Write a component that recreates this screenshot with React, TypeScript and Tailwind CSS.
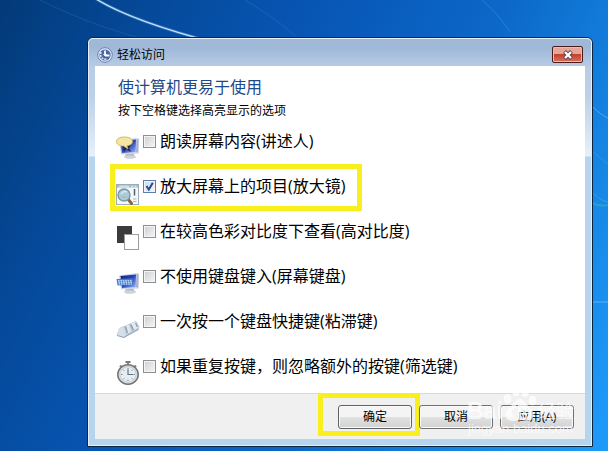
import { useState } from "react";
import { clsx } from "clsx";
import type { ReactNode } from "react";

type TOption = {
  id: string;
  label: string;
  icon: ReactNode;
  highlighted?: boolean;
};

const Monitor = () => (
  <>
    <path d="M9 18.5 L17 17 L19 20.500 Q15 23 10 22 Z" fill="#b4b8c0" />
    <ellipse cx="14" cy="21" rx="6" ry="1.8" fill="#cfd2d8" />
    <path d="M3 4.5 L21 2 Q23 2 23 4 L22.5 17.5 L5 18.5 Z" fill="#ccd5e8" />
    <path d="M4.5 5 L20 3.5 L19.500 16 L6 17 Z" fill="url(#screen)" />
    <path d="M20.5 3.5 L22.5 3 L22.2 16.8 L20 16 Z" fill="#a4b2d0" />
  </>
);

const NarratorIcon = () => (
  <svg viewBox="0 0 24 24" className="size-6" aria-hidden="true">
    <defs>
      <linearGradient id="screen" x1="0" y1="0" x2="1" y2="1">
        <stop offset="0" stopColor="#101f78" />
        <stop offset="0.5" stopColor="#2a45c0" />
        <stop offset="1" stopColor="#9db4f6" />
      </linearGradient>
    </defs>
    <Monitor />
    <path d="M7 9 L15 9 L13 12 L15 16 L10 13 L8 16 Z" fill="#23233c" />
    <path
      d="M8 1 C13 1 16.500 2.500 16.500 5.500 C16.500 8 14 9.500 11 9.800 L12 13 L7.500 10 C3 10 0.500 8 0.500 5.500 C0.500 2.500 4 1 8 1 Z"
      fill="#f3e5a4"
      stroke="#c8a850"
      strokeWidth="0.8"
    />
  </svg>
);

const MagnifierIcon = () => (
  <svg viewBox="0 0 24 24" className="size-6" aria-hidden="true">
    <rect x="0.5" y="3.500" width="22" height="20" fill="#f6f9fb" stroke="#9badba" />
    <rect x="1" y="4" width="21" height="2.500" fill="#a3bacb" />
    <path d="M3 5.2 H13 M15 5.2 H17 M18.500 5.2 H20.500" stroke="#eef5fa" />
    <path d="M18.500 8 V14.500" stroke="#4f6270" strokeWidth="1.500" />
    <path d="M17 18 H20.500 M17 20.500 H20.500" stroke="#a9b6c0" />
    <path d="M12 18 L15.500 22.500" stroke="#8b6741" strokeWidth="3" strokeLinecap="round" />
    <circle cx="8" cy="14" r="6" fill="#a9c9df" stroke="#7c97a8" strokeWidth="1.4" />
    <path d="M5 13 Q7 9.500 11 11" stroke="#d8eaf4" strokeWidth="1.5" fill="none" />
    <path d="M5 16 H11" stroke="#a8c3a0" strokeWidth="1.5" />
  </svg>
);

const ContrastIcon = () => (
  <svg viewBox="0 0 24 24" className="size-6" aria-hidden="true">
    <rect x="1" y="0" width="15" height="17" fill="#3b3b3b" />
    <rect x="8.500" y="8.500" width="14" height="15" fill="#ffffff" stroke="#9c9c9c" />
  </svg>
);

const ScreenKeyboardIcon = () => (
  <svg viewBox="0 0 24 24" className="size-6" aria-hidden="true">
    <Monitor />
    <path d="M0.500 8 L16.500 7.500 L17 14 L1.500 14.500 Z" fill="#3f7fd0" />
    <path
      d="M2 9.700 H16 M2.300 11.300 H16 M2.600 13 H16"
      stroke="#e6f1fd"
      strokeWidth="1.100"
      strokeDasharray="1.600 0.800"
    />
  </svg>
);

const StickyKeysIcon = () => (
  <svg viewBox="0 0 24 24" className="size-6" aria-hidden="true">
    <path d="M0.500 19 L3.500 12 L20 5 L23.500 11 L22.500 13.500 L8 21.500 Z" fill="#b7c3d2" />
    <path d="M3.500 12 L8 11 L10 19 L8 21 L1 19 Z" fill="#d5deea" />
    <path d="M9 9.800 L13 8.500 L15.500 15.500 L11 18 Z" fill="#dfe6ef" />
    <path d="M15 7.500 L19.500 5.800 L22.800 11.500 L17 14.500 Z" fill="#e4eaf2" />
    <path d="M9.500 10.500 L11.500 17 M15 8.500 L17.500 14 M19.500 7 L21.500 11" stroke="#8b9bb0" strokeWidth="1.200" />
    <path d="M1 19.500 L8 21.500 L22.500 13.500" stroke="#98a6b8" fill="none" />
  </svg>
);

const StopwatchIcon = () => (
  <svg viewBox="0 0 24 24" className="size-6" aria-hidden="true">
    <path d="M12 0.500 V4 M9.500 1 H14.500" stroke="#7b7b7b" strokeWidth="1.800" />
    <path d="M4 4.500 L6 6.500 M20 4.500 L18 6.500" stroke="#858585" strokeWidth="2.200" />
    <ellipse cx="12" cy="13.500" rx="10.200" ry="9.800" fill="#e9edf0" stroke="#75787b" strokeWidth="1.600" />
    <ellipse cx="12" cy="13.500" rx="8.200" ry="7.800" fill="#e6eef4" stroke="#b4babf" strokeWidth="0.800" />
    <path
      d="M12 7 V8.500 M12 18.500 V20 M5 13.500 H6.500 M17.500 13.500 H19 M7.300 8.800 L8.300 9.800 M16.700 8.800 L15.700 9.800 M7.300 18.200 L8.300 17.200 M16.700 18.200 L15.700 17.200"
      stroke="#7d8790"
    />
    <path d="M12 8.500 V13.500 H17" stroke="#5c7488" strokeWidth="1.200" fill="none" />
  </svg>
);

const EaseOfAccessIcon = () => (
  <svg viewBox="0 0 16 16" className="size-4" aria-hidden="true">
    <circle cx="8" cy="8" r="7.300" fill="#e3eaf6" stroke="#6b80ae" />
    <circle cx="8" cy="8" r="5.600" fill="#4a66a5" />
    <path d="M8 8.500 V3.500 M8 8.500 H12.500" stroke="#ffffff" strokeWidth="1.800" />
    <path d="M4 5 Q2.800 8 4.500 10.500 Q6.500 12.800 10 12" stroke="#dfe8f8" strokeWidth="1.600" strokeDasharray="2 1" fill="none" />
    <path d="M6.500 7 L8 8.800 L9.500 7" stroke="#ffffff" fill="none" />
  </svg>
);

const options: TOption[] = [
  { id: "narrator", label: "朗读屏幕内容(讲述人)", icon: <NarratorIcon /> },
  {
    id: "magnifier",
    label: "放大屏幕上的项目(放大镜)",
    icon: <MagnifierIcon />,
    highlighted: true,
  },
  { id: "contrast", label: "在较高色彩对比度下查看(高对比度)", icon: <ContrastIcon /> },
  { id: "keyboard", label: "不使用键盘键入(屏幕键盘)", icon: <ScreenKeyboardIcon /> },
  { id: "sticky", label: "一次按一个键盘快捷键(粘滞键)", icon: <StickyKeysIcon /> },
  { id: "filter", label: "如果重复按键，则忽略额外的按键(筛选键)", icon: <StopwatchIcon /> },
];

const Wallpaper = () => (
  <svg
    viewBox="0 0 608 451"
    preserveAspectRatio="none"
    className="absolute inset-0 size-full"
    fill="none"
    aria-hidden="true"
  >
    <path d="M96 -1 C122 15 162 29 216 43" stroke="#7fb8ec" strokeWidth="3" opacity="0.35" />
    <path d="M96 -1 C122 15 162 29 216 43" stroke="#c2e2fb" strokeWidth="1.300" />
    <path d="M40 0 C80 20 120 34 165 44" stroke="#2f7fd0" opacity="0.3" />
    <path d="M245 0 C265 12 285 26 300 40" stroke="#4a98e4" opacity="0.25" />
    <path d="M482 0 C492 8 502 20 510 32" stroke="#5aa8ee" opacity="0.35" />
    <path d="M592 106 C598 112 603 116 608 118" stroke="#8ccaf5" opacity="0.5" />
    <path d="M592 151 L608 164" stroke="#6ab6f0" opacity="0.3" />
    <path d="M592 192 C598 198 603 201 608 202" stroke="#5ab8f0" opacity="0.4" />
    <path d="M592 203 C598 206 603 206 608 205" stroke="#35b0b8" strokeWidth="2" opacity="0.6" />
    <path d="M592 302 H608" stroke="#5cc0fa" strokeWidth="2" opacity="0.4" />
  </svg>
);

const Watermark = () => (
  <div className="pointer-events-none absolute right-[11px] bottom-0.5 w-[107px] text-white/70">
    <div className="flex items-end justify-between">
      <span className="font-[Liberation_Sans] text-[23px] leading-[20px] font-bold">
        Bai
      </span>
      <svg viewBox="0 0 34 36" className="h-9 w-[34px]" fill="currentColor" aria-hidden="true">
        <ellipse cx="4.500" cy="14" rx="4" ry="5" />
        <ellipse cx="13" cy="6" rx="4" ry="5.500" />
        <ellipse cx="22" cy="6.500" rx="4" ry="5.500" />
        <ellipse cx="29.500" cy="15.500" rx="4" ry="5" />
        <path
          fillRule="evenodd"
          d="M17 14 C22 14 23 20 27 23 C33 28 31 36 24 36 C20 36 19 35 17 35 C14 35 13 36 9 36 C2 36 0 28 6 23 C10 20 12 14 17 14 Z M12 23 C8 24 8 32 12 32 H15 V20 H13 V23 Z M18 23 V30 C18 33 25 33 25 30 V23 H23 V30 H20 V23 Z"
        />
      </svg>
      <span className="text-[18px] leading-[20px]">经验</span>
    </div>
    <p className="text-center font-[Liberation_Sans] text-[13px] leading-[16px] whitespace-nowrap">
      jingyan.baidu.com
    </p>
  </div>
);

const DialogButton = ({
  children,
  highlighted,
}: {
  children: ReactNode;
  highlighted?: boolean;
}) => (
  <div className="relative">
    <button
      type="button"
      className={clsx(
        "block h-6 w-[74px] rounded-[3px] border bg-linear-to-b from-[#f4f4f4] from-50% via-[#e2e2e2] via-50% to-[#d2d2d2] text-[12px] leading-5 text-black shadow-[inset_0_0_0_1px_#fafafa]",
        highlighted ? "border-[#5d6264]" : "border-[#707070]"
      )}
    >
      {children}
    </button>
    {highlighted && (
      <span className="pointer-events-none absolute -top-3 -right-2 -bottom-[7px] -left-5 border-5 border-[#f8ef1c]" />
    )}
  </div>
);

const OptionRow = ({
  option,
  checked,
  onToggle,
}: {
  option: TOption;
  checked: boolean;
  onToggle: () => void;
}) => (
  <li className="relative flex h-[31px] w-fit gap-[3px]">
    <div className="self-end">{option.icon}</div>
    <label htmlFor={option.id} className="flex h-6 items-center gap-1 whitespace-nowrap">
      <span className="relative flex">
        <input
          id={option.id}
          type="checkbox"
          checked={checked}
          onChange={onToggle}
          className="size-[13px] appearance-none border border-[#8e8f8f] bg-linear-to-br from-[#cbcfd5] to-[#f6f6f6] shadow-[inset_0_0_0_1px_#f4f4f4] checked:border-[#5a7fa8] checked:from-[#c4dcf2]"
        />
        {checked && (
          <svg viewBox="0 0 13 13" className="pointer-events-none absolute size-[13px]" aria-hidden="true">
            <path d="M3.500 6 L5.800 9.500 L9.800 2.800" fill="none" stroke="#2c4a94" strokeWidth="2" />
          </svg>
        )}
      </span>
      <span className="text-base leading-6">{option.label}</span>
    </label>
    {option.highlighted && (
      <span className="pointer-events-none absolute -top-[10px] -right-[17px] -bottom-[6px] -left-[6px] border-5 border-[#f8ef1c]" />
    )}
  </li>
);

export default function App() {
  const [checked, setChecked] = useState<string[]>(["magnifier"]);

  const toggle = (id: string) =>
    setChecked((prev) =>
      prev.includes(id) ? prev.filter((i) => i !== id) : [...prev, id]
    );

  return (
    <main className="relative min-h-screen overflow-hidden bg-[linear-gradient(115deg,#033a78_0%,#054a9c_20%,#0858b8_42%,#0c68c8_62%,#1482e0_80%,#1e9cfa_100%)] pt-[37px] pr-[15px] pl-[87px] font-[Open_Sans,Noto_Sans_CJK_SC,sans-serif]">
      <Wallpaper />
      <section
        aria-labelledby="dialog-title"
        className="relative rounded-t-[6px] border border-[#0c2440] bg-[#b9d5ec]"
      >
        <div className="rounded-t-[5px] border border-[#e4f0fa] bg-[linear-gradient(to_bottom,#a2b8d6_0px,#9fb8d8_8px,#b8cce5_28px,#bdd2ea_60px,#e6f0fa_117px,#b7d4ee_118px,#b5d5ee_100%)] px-[6px] pb-[6px]">
          <header className="flex h-[27px] items-center gap-1 pt-1 pr-0.5 pl-0.5">
            <EaseOfAccessIcon />
            <h1 id="dialog-title" className="flex-1 text-[12px] leading-4 text-black">
              轻松访问
            </h1>
            <button
              type="button"
              aria-label="关闭"
              className="flex h-[17px] w-[31px] items-center justify-center rounded-[2px] border border-[#4a1c1c] bg-linear-to-b from-[#e5a597] from-45% via-[#c2412f] via-50% to-[#d8705c] shadow-[inset_0_0_0_1px_#eebbb0]"
            >
              <svg viewBox="0 0 12 10" className="h-[10px] w-3" aria-hidden="true">
                <path d="M2.500 1.500 L9.500 8.500 M9.500 1.500 L2.500 8.500" stroke="#5c4048" strokeWidth="4" />
                <path d="M3 2 L9 8 M9 2 L3 8" stroke="#ffffff" strokeWidth="2.400" />
              </svg>
            </button>
          </header>

          <div className="bg-white px-[21px] pt-[9px] pb-2">
            <h2 className="pl-0.5 text-base leading-6 text-[#1d4a8c]">使计算机更易于使用</h2>
            <p className="pl-0.5 text-[12px] leading-6 text-black">按下空格键选择高亮显示的选项</p>
            <ul className="mt-[6px] flex flex-col gap-[14px] text-black">
              {options.map((option) => (
                <OptionRow
                  key={option.id}
                  option={option}
                  checked={checked.includes(option.id)}
                  onToggle={() => toggle(option.id)}
                />
              ))}
            </ul>
          </div>

          <footer className="relative border-t border-[#d9d9d9] bg-[#f0f0f0] pt-[11px] pr-[11px] pb-[10px]">
            <div className="flex justify-end gap-[7px]">
              <DialogButton highlighted>确定</DialogButton>
              <DialogButton>取消</DialogButton>
              <DialogButton>应用(A)</DialogButton>
            </div>
            <Watermark />
          </footer>
        </div>
      </section>
    </main>
  );
}
